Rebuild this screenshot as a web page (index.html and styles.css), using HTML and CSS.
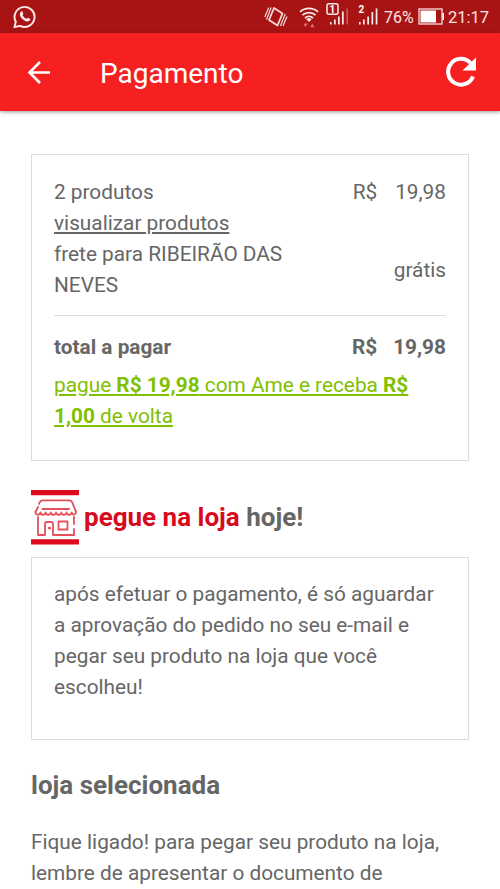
FILE: index.html
```
<!DOCTYPE html>
<html lang="pt-BR">
<head>
    <meta charset="UTF-8">
    <meta name="viewport" content="width=device-width, initial-scale=1.0">
    <title>Pagamento</title>
    <link rel="stylesheet" href="styles.css">
</head>
<body>
    <div class="status-bar">
        <svg class="whatsapp" width="24" height="24" viewBox="0 0 24 24" fill="none" stroke="#fbeaea">
            <path d="M1.400 22.200l1.400-5.500A10 10 0 1 1 7 20.800z" stroke-width="1.900" stroke-linejoin="round"/>
            <path d="M8.100 6.600c.5-.5 1.200-.4 1.400.1l.8 2c.1.5-.7 1.100-.7 1.600.8 1.600 2.100 2.800 3.800 3.500.5 0 1-1.200 1.500-1.100l2.100 1c.4.3.2 1.400-.4 2-1.100 1-2.600 1.100-4.300.3-2.300-1-4-2.700-5-4.700-.8-1.900-.5-3.700.8-4.700z" fill="#fbeaea" stroke="none"/>
        </svg>
        <div class="status-right">
            <svg class="vibrate" width="24" height="22" viewBox="0 0 24 22" fill="none" stroke="#f6dada">
                <path d="M10 2l8.500 5.500-5 12L5 14z" stroke-width="1.800" stroke-linejoin="round"/>
                <path d="M7.200 1.500L2.500 13.500M4.800 1.500L.8 11M16.500 20l4.700-12M19 20l4-9.500" stroke-width="1.200"/>
            </svg>
            <svg class="wifi" width="20" height="22" viewBox="0 0 20 22" fill="none" stroke="#fbeaea">
                <path d="M1 5.800a13.500 13.500 0 0 1 18 0M3.500 9a10 10 0 0 1 13 0M6 12a6 6 0 0 1 8 0" stroke-width="1.700"/>
                <path d="M7.300 13.200a4 4 0 0 1 5.400 0L10 16z" fill="#fbeaea" stroke="none"/>
                <path d="M4.200 17.500h4.600l-2.300 3.700zM11 21.200h4.600l-2.300-3.700z" fill="#dc6a68" stroke="none"/>
            </svg>
            <svg class="signal" width="24" height="24" viewBox="0 0 24 24">
                <rect x="1" y="1.700" width="11" height="10.600" rx="2" fill="none" stroke="#fbeaea" stroke-width="1.500"/>
                <text x="3.500" y="10.700" class="sim">1</text>
                <path d="M4 20h1.600v2.500H4zM8 17.500h1.700v5H8zM12 14.500h1.700v8H12zM16 9.500h1.700v13H16z" fill="#fbeaea"/>
                <path d="M20.300 6.500H22v16h-1.700z" fill="#cd5554"/>
            </svg>
            <svg class="signal-two" width="22" height="24" viewBox="0 0 22 24">
                <text x="0.500" y="10.800" class="sim">2</text>
                <path d="M1 20h1.600v2.500H1zM5 17.500h1.700v5H5zM9.300 14.500H11v8H9.300zM13.500 10h1.700v12.500h-1.700zM17.700 6.500h1.700v16h-1.700z" fill="#fbeaea"/>
            </svg>
            <span class="percent">76%</span>
            <svg class="battery" width="27" height="17" viewBox="0 0 27 17">
                <rect x="1" y="1" width="23" height="15" fill="none" stroke="#f3cfcf" stroke-width="1.400"/>
                <rect x="2.500" y="2.500" width="15.500" height="12" fill="#fff"/>
                <path d="M24.500 5H26v7h-1.500z" fill="#fff"/>
            </svg>
            <span class="clock">21:17</span>
        </div>
    </div>

    <header class="toolbar">
        <svg class="back" width="24" height="24" viewBox="0 0 24 24" fill="none" stroke="#fff" stroke-width="2.600">
            <path d="M23 12.500H3M13 2L2.500 12.500 13 23"/>
        </svg>
        <h1>Pagamento</h1>
        <svg class="refresh" width="32" height="32" viewBox="0 0 32 32">
            <path d="M28 20.500A12.900 12.900 0 1 1 25.500 7" fill="none" stroke="#fff" stroke-width="4"/>
            <path d="M31 1.500v13H17.500z" fill="#fff"/>
        </svg>
    </header>

    <main class="content">
        <section class="card summary">
            <div class="row">
                <div>2 produtos<br><a href="#" class="link">visualizar produtos</a></div>
                <div class="price"><span>R$</span><span>19,98</span></div>
            </div>
            <div class="row shipping">
                <div class="destination">frete para RIBEIRÃO DAS NEVES</div>
                <div>grátis</div>
            </div>
            <div class="row total">
                <div>total a pagar</div>
                <div class="price"><span>R$</span><span>19,98</span></div>
            </div>
            <a href="#" class="ame">pague <b>R$ 19,98</b> com Ame e receba <b>R$ 1,00</b> de volta</a>
        </section>

        <div class="pickup-title">
            <svg width="48" height="55" viewBox="0 0 48 55" fill="none">
                <path d="M0 0h48v5.200H0zM0 49.200h48v5.300H0z" fill="#dc0a1c"/>
                <g stroke="#e5505c" stroke-width="1.800" stroke-linecap="round" stroke-linejoin="round">
                    <path d="M8 14q1-3.700 4-3.700h26q2.500 0 3.500 2.500l3.500 9M7 17L4.500 22M11.500 19h26.500"/>
                    <path d="M4.500 22c-.5 3.500 4.500 3.500 5 .5 0 3 5 3 5.200 0 0 3 5 3 5.200 0 0 3 5 3 5.200 0 0 3 5 3 5.200 0 0 3 5 3 5.200 0 0 3 5 3 5.200 0 .5 3 4.500 2.500 4-.5"/>
                    <path d="M7 27v18h7V34q0-2 2-2h4q2 0 2 2v11h21v-6M43 34v-7M27.500 31.500h9v8h-9z"/>
                    <circle cx="18.500" cy="38" r=".7"/>
                </g>
            </svg>
            <h2><span>pegue na loja</span> hoje!</h2>
        </div>

        <section class="card info">
            após efetuar o pagamento, é só aguardar a aprovação do pedido no seu e-mail e pegar seu produto na loja que você escolheu!
        </section>

        <h2 class="store-title">loja selecionada</h2>
        <p>Fique ligado! para pegar seu produto na loja, lembre de apresentar o documento de</p>
    </main>
</body>
</html>
```
FILE: styles.css
```
* {
    box-sizing: border-box;
}

body {
    margin: 0;
    height: 889px;
    overflow: hidden;
    background-color: #fff;
    color: #666;
    font-family: Roboto, sans-serif;
    font-size: 20.8px;
    line-height: 31px;
}

svg {
    display: block;
    flex-shrink: 0;
}

h1, h2, p {
    margin: 0;
}

.status-bar {
    display: flex;
    justify-content: space-between;
    height: 33px;
    padding: 0 11px 0 13px;
    background-color: #a81414;
    color: #f9e4e4;
}

.whatsapp {
    margin-top: 5px;
}

.status-right {
    display: flex;
    font-size: 16.5px;
    line-height: 35px;
}

.vibrate {
    margin: 6px 11px 0 0;
}

.wifi {
    margin: 6px 7px 0 0;
}

.signal {
    margin: 2px 8px 0 0;
}

.signal-two {
    margin: 2px 4px 0 0;
}

.sim {
    fill: #fff;
    font-size: 10px;
    font-weight: bold;
}

.percent {
    width: 31px;
    font-size: 16px;
}

.battery {
    margin: 8px 3px 0 3px;
}

.toolbar {
    display: flex;
    align-items: center;
    height: 78px;
    padding: 0 23px 0 27px;
    background-color: #f62021;
    box-shadow: 0 1px 4px rgba(0, 0, 0, 0.4);
    color: #fff;
}

.toolbar h1 {
    flex: 1;
    margin: 3px 0 0 49px;
    font-size: 28px;
    font-weight: normal;
}

.content {
    padding: 43px 31px 0;
}

.card {
    padding: 21px 22px;
    border: 1px solid #dcdcdc;
}

.summary {
    height: 307px;
    padding-top: 22px;
}

.row {
    display: flex;
    justify-content: space-between;
}

.price {
    display: flex;
    gap: 18px;
}

.link {
    color: inherit;
}

.shipping {
    align-items: center;
    padding-bottom: 14px;
    border-bottom: 1px solid #dcdcdc;
}

.destination {
    width: 250px;
}

.total {
    margin: 16px 0 7px;
    font-weight: bold;
}

.total .price {
    gap: 16px;
}

.ame {
    display: block;
    color: #80c000;
}

.pickup-title {
    display: flex;
    align-items: center;
    gap: 5px;
    margin: 29px 0 12px;
}

h2 {
    font-size: 26px;
}

.pickup-title span {
    color: #d70b1c;
}

.info {
    height: 183px;
}

.store-title {
    margin: 30px 0 26px;
}
```
